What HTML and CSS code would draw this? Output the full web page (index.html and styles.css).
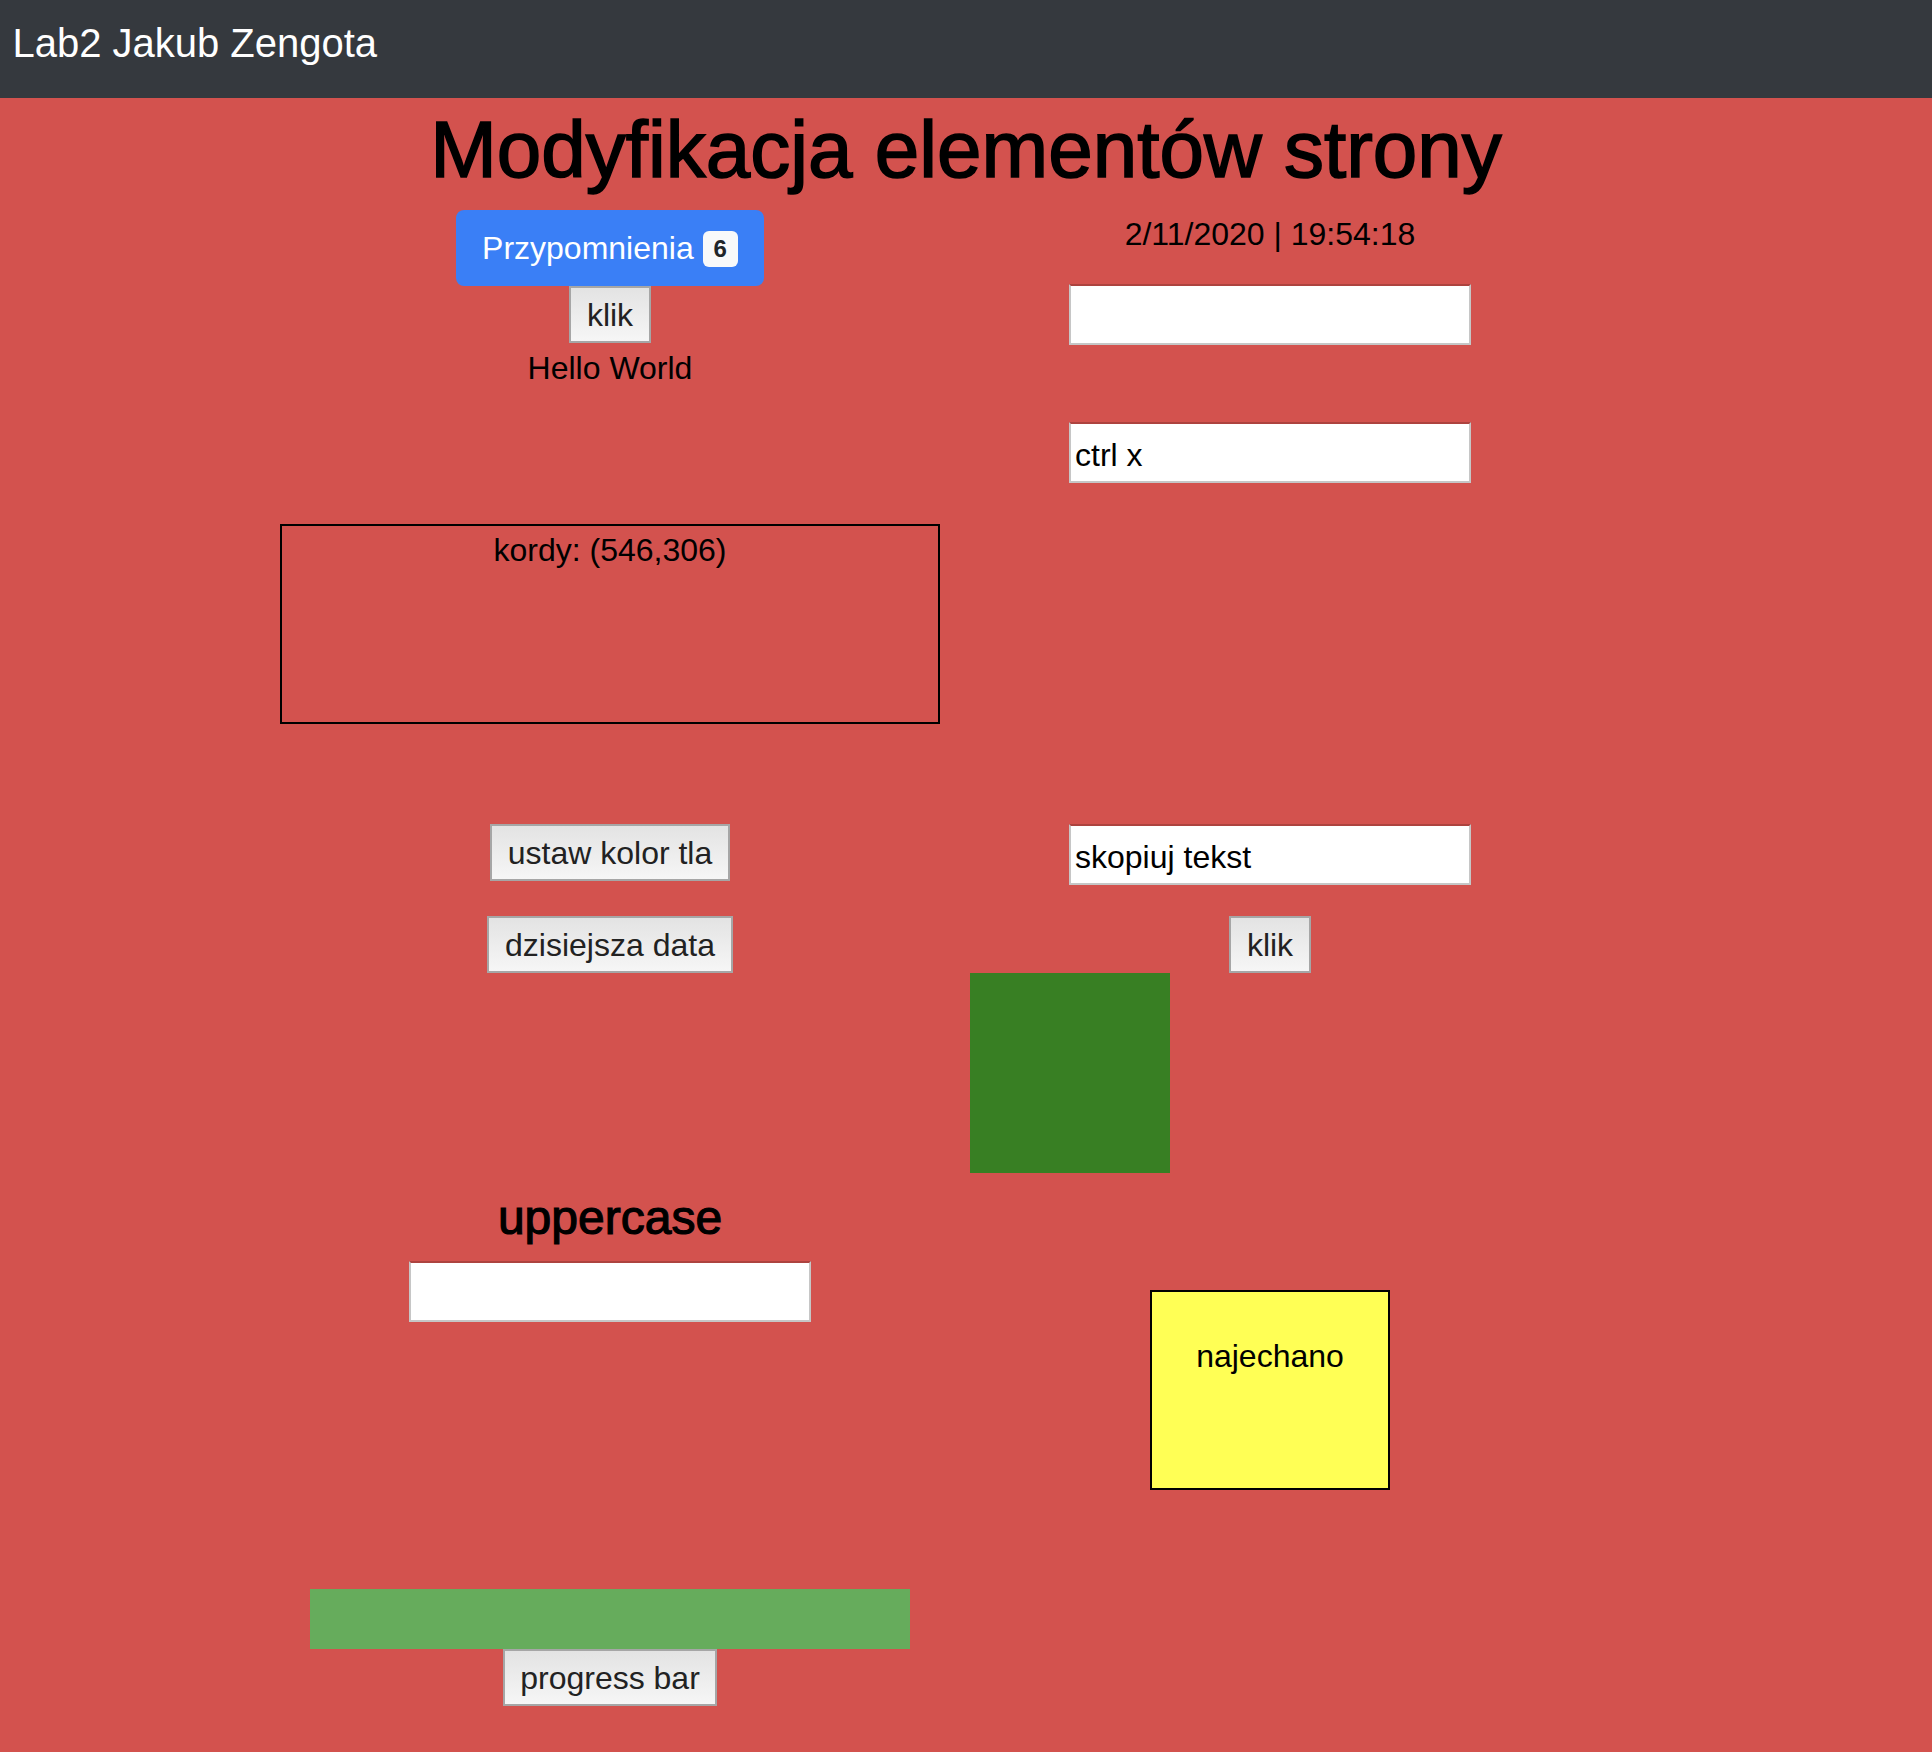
FILE: index.html
```html
<!DOCTYPE html>
<html lang="pl">
<head>
<meta charset="utf-8">
<title>Lab2 Jakub Zengota</title>
<link rel="stylesheet" href="styles.css">
</head>
<body>
<nav class="navbar"><span class="brand">Lab2 Jakub Zengota</span></nav>
<main class="page">
  <h1 class="title">Modyfikacja elementów strony</h1>
  <div class="layout">
    <section class="row row-intro">
      <div class="col">
        <button class="btn-primary">Przypomnienia <span class="badge">6</span></button>
        <button class="btn">klik</button>
        <p class="hello">Hello World</p>
      </div>
      <div class="col">
        <p class="clock">2/11/2020 | 19:54:18</p>
        <input class="field field-first" type="text">
        <input class="field field-cut" type="text" value="ctrl x">
      </div>
    </section>
    <section class="row row-coords">
      <div class="col col-flush">
        <div class="coords">kordy: (546,306)</div>
      </div>
      <div class="col"></div>
    </section>
    <section class="row row-actions">
      <div class="col">
        <button class="btn">ustaw kolor tla</button>
        <button class="btn btn-date">dzisiejsza data</button>
      </div>
      <div class="col">
        <input class="field" type="text" value="skopiuj tekst">
        <button class="btn btn-copy">klik</button>
        <div class="square"></div>
      </div>
    </section>
    <section class="row row-case">
      <div class="col">
        <h4 class="case-title">uppercase</h4>
        <input class="field" type="text">
      </div>
      <div class="col">
        <div class="hover-box">najechano</div>
      </div>
    </section>
    <section class="row row-progress">
      <div class="col">
        <div class="progress"></div>
        <button class="btn">progress bar</button>
      </div>
      <div class="col"></div>
    </section>
  </div>
</main>
</body>
</html>
```
FILE: styles.css
```css
html {
  background: #d3524e;
  zoom: 2;
}

body {
  margin: 0;
  font-family: "Liberation Sans", Arial, sans-serif;
  font-size: 16px;
  line-height: 24px;
  color: #000;
}

.navbar {
  height: 49px;
  box-sizing: border-box;
  padding: 6.4px 0 0 6.2px;
  background: #35393e;
}

.brand {
  font-size: 20px;
  line-height: 30px;
  color: #fff;
}

.page {
  padding-bottom: 22px;
}

.title {
  margin: 2px 0 6px;
  font-size: 40px;
  line-height: 48px;
  font-weight: 400;
  text-align: center;
  -webkit-text-stroke: 0.8px #000;
}

.layout {
  width: 660px;
  margin-left: 140px;
}

.row {
  display: grid;
  grid-template-columns: 330px 330px;
}

.col {
  display: flex;
  flex-direction: column;
  align-items: center;
  padding: 0 15px;
  text-align: center;
}

.col-flush {
  padding: 0;
  align-items: stretch;
}

.row-coords {
  margin-top: 20.5px;
}

.row-actions {
  margin-top: 50px;
}

.row-progress {
  margin-top: 49.5px;
}

.btn-primary {
  height: 38px;
  box-sizing: border-box;
  padding: 0 12px;
  border: 1px solid #3a7ff6;
  border-radius: 4px;
  background: #3a7ff6;
  color: #fff;
  font-family: inherit;
  font-size: 16px;
  line-height: 24px;
}

.badge {
  position: relative;
  top: -1px;
  display: inline-block;
  padding: 3px 5.5px;
  border-radius: 3px;
  background: #f8f9fa;
  color: #212529;
  font-size: 12px;
  font-weight: 700;
  line-height: 1;
}

.btn {
  height: 28.5px;
  box-sizing: border-box;
  padding: 0 7.8px;
  border: 1px solid #a6a6a6;
  border-radius: 0;
  background: linear-gradient(#e3e3e3, #f6f6f6);
  color: #222;
  font-family: inherit;
  font-size: 16px;
  line-height: 24px;
}

.btn-date {
  margin-top: 17.5px;
}

.btn-copy {
  margin-top: 15.7px;
}

.hello {
  margin: 0.5px 0 0;
}

.clock {
  margin: 0;
}

.field {
  width: 201px;
  height: 30.5px;
  box-sizing: border-box;
  padding: 2.5px 2px 0;
  border: 1px solid #c6c6c6;
  border-top-color: rgba(0, 0, 0, 0.18);
  background: #fff;
  background-clip: padding-box;
  color: #000;
  font-family: inherit;
  font-size: 16px;
  outline: none;
}

.field-first {
  margin-top: 13px;
}

.field-cut {
  margin-top: 38.5px;
}

.coords {
  height: 100px;
  box-sizing: border-box;
  border: 1px solid #000;
  text-align: center;
}

.square {
  align-self: flex-start;
  width: 100px;
  height: 100px;
  background: #387f23;
}

.case-title {
  margin: 8px 0 7px;
  font-size: 24px;
  line-height: 28.8px;
  font-weight: 400;
  -webkit-text-stroke: 0.6px #000;
}

.hover-box {
  width: 120px;
  height: 100px;
  box-sizing: border-box;
  margin-top: 58.5px;
  padding-top: 20px;
  border: 1px solid #000;
  background: #ffff55;
  text-align: center;
}

.progress {
  align-self: stretch;
  height: 30px;
  background: #66ac5c;
}
```
